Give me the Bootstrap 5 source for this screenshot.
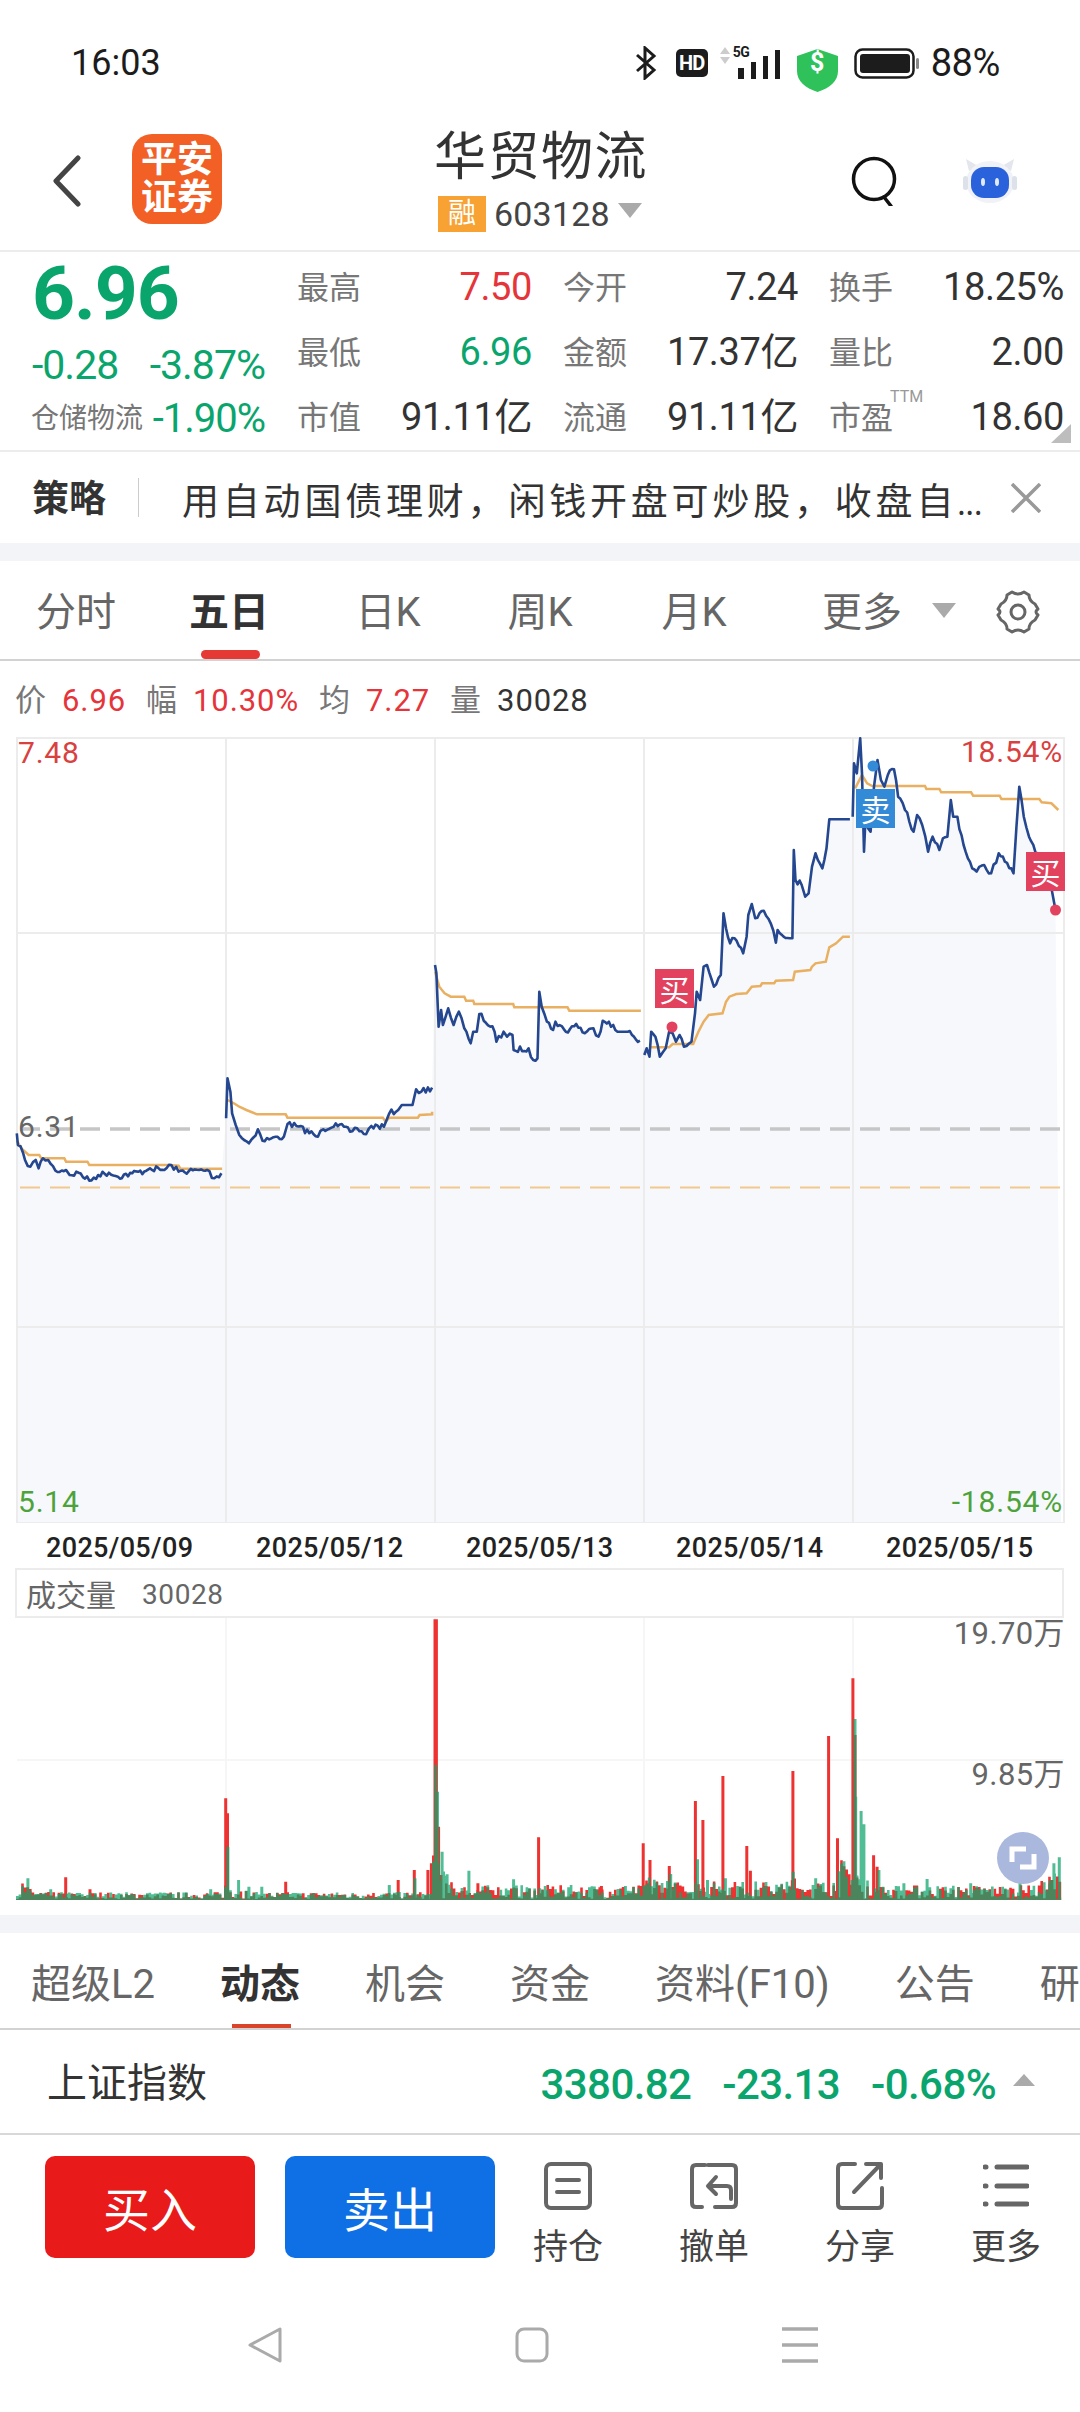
<!DOCTYPE html>
<html lang="zh-CN">
<head>
<meta charset="UTF-8" />
<meta name="viewport" content="width=device-width, initial-scale=1.0" />
<title>华贸物流</title>
<link href="https://cdn.jsdelivr.net/npm/bootstrap@5.3.0/dist/css/bootstrap.min.css" rel="stylesheet" />
<style>
  :root { --up: #e5353a; --down: #0aa56d; --band: #f3f4f8; --hair: #ececec; }
  html, body { width: 1080px; height: 2412px; overflow: hidden; background: #fff; }
  body { font-family: Roboto, "Noto Sans CJK SC", sans-serif; color: #333; }
  .up { color: var(--up); }
  .down { color: var(--down); }

  .status-bar { height: 90px; padding: 36px 80px 0 71px; font-size: 36px; color: #1c1c1c; }
  .status-icons { margin-left: auto; }
  .hd-tag { width: 32px; height: 28px; margin-left: 19px; border-radius: 5px; background: #1c1c1c; color: #fff; font-size: 20px; font-weight: 700; line-height: 28px; text-align: center; letter-spacing: -1px; }
  .sig-wrap { position: relative; width: 61px; height: 32px; margin-left: 11px; }
  .sig-5g { position: absolute; left: 14px; top: -3px; font-size: 14px; font-weight: 700; line-height: 16px; letter-spacing: -.5px; }
  .shield-wrap { position: relative; width: 41px; height: 43px; margin-left: 17px; }
  .shield-wrap span { position: absolute; inset: 0; color: #fff; font-size: 25px; font-weight: 700; line-height: 42px; text-align: center; }
  .batt-pct { margin-left: 11px; font-size: 38px; letter-spacing: -.4px; }

  .top-head { height: 162px; padding-top: 22px; border-bottom: 2px solid var(--hair); }
  .head-back { margin-left: 53px; }
  .app-logo { width: 90px; height: 90px; margin-left: 51px; margin-top: -4px; border-radius: 20px; background: #f26026; color: #fff; font-size: 36px; font-weight: 700; line-height: 38px; text-align: center; padding-top: 7px; }
  .title-block { width: 300px; margin-left: 212px; margin-top: -7px; }
  .stock-name { font-size: 52px; line-height: 62px; letter-spacing: 1.5px; color: #333; font-family: "Noto Sans CJK SC", sans-serif; }
  .code-line { height: 38px; margin: 11px 0 0 4px; }
  .rong-tag { width: 48px; height: 36px; background: #f7a233; color: #fff; font-size: 28px; line-height: 36px; text-align: center; }
  .code-num { margin-left: 8px; font-size: 34px; color: #444; letter-spacing: .2px; }
  .drop-tri { width: 0; height: 0; border-left: 12px solid transparent; border-right: 12px solid transparent; border-top: 15px solid #aaa; margin-left: 8px; margin-top: -8px; }
  .head-right { margin-left: auto; padding-right: 63px; }
  .robot-mark { margin-left: 66px; }

  .quote-box { position: relative; height: 200px; border-bottom: 2px solid var(--hair); }
  .quote-left { width: 297px; padding-left: 32px; }
  .big-price { height: 76px; padding-top: 3px; font-size: 75px; font-weight: 700; line-height: 76px; letter-spacing: -1px; color: var(--down); }
  .chg-line { margin-top: 14px; font-size: 41px; line-height: 46px; letter-spacing: -1px; width: 233px; }
  .sector-line { margin-top: 8px; width: 233px; line-height: 46px; }
  .sector-name { font-size: 28px; color: #777; margin-left: -1px; }
  .sector-val { font-size: 40px; letter-spacing: -1px; }
  .stat-wrap { display: grid; grid-template-columns: repeat(3, 235px); column-gap: 31px; grid-auto-rows: 65px; padding-top: 3px; }
  .stat-cell { position: relative; }
  .stat-key { font-size: 32px; color: #777; }
  .stat-val { font-size: 38px; letter-spacing: -.4px; }
  .ttm-sup { position: absolute; left: 61px; top: 0; font-size: 16px; color: #999; }
  .corner-tri { position: absolute; right: 9px; bottom: 7px; width: 0; height: 0; border-left: 20px solid transparent; border-bottom: 19px solid #bdbdbd; }

  .plan-row { height: 91px; padding: 5px 0 0 32px; }
  .plan-tag { font-size: 37px; font-weight: 700; color: #333; width: 106px; }
  .plan-rule { width: 1px; height: 39px; background: #ccc; margin-top: -5px; }
  .plan-text { margin-left: 43px; width: 806px; font-size: 37px; letter-spacing: 3.8px; white-space: nowrap; overflow: hidden; color: #333; font-family: "Noto Sans CJK SC", sans-serif; }
  .plan-dots { letter-spacing: 0; font-size: 30px; }
  .plan-close { margin: -5px 0 0 23px; }
  .gap-band { height: 18px; background: var(--band); }

  .period-row { position: relative; height: 100px; border-bottom: 2px solid #d2d2d2; }
  .period-grid { display: grid; grid-template-columns: 152px 154px 164px 140px 168px 168px; width: 946px; }
  .period-tab { position: relative; height: 98px; line-height: 104px; text-align: center; font-size: 40px; color: #666; }
  .period-tab.on { color: #333; font-weight: 700; }
  .period-tab.on::after { content: ""; position: absolute; left: 49px; bottom: 0; width: 59px; height: 9px; border-radius: 5px; background: #e53935; }
  .tri-gray { position: absolute; left: 932px; top: 42px; width: 0; height: 0; border-left: 12px solid transparent; border-right: 12px solid transparent; border-top: 15px solid #aaa; }
  .gear-pos { position: absolute; left: 996px; top: 29px; }

  .info-line { height: 76px; padding: 5px 0 0 15px; font-size: 31px; color: #777; }
  .info-line b { font-weight: 400; margin: 0 20px 0 16px; letter-spacing: .9px; }
  .info-line .vol-num { color: #333; }

  .price-panel { position: relative; height: 786px; }
  .price-panel svg, .vol-panel svg { display: block; }
  .axis-tag { position: absolute; font-size: 30px; line-height: 32px; letter-spacing: .8px; }
  .trade-flag { position: absolute; width: 39px; height: 39px; color: #fff; font-size: 30px; line-height: 38px; text-align: center; font-family: "Noto Sans CJK SC", sans-serif; }
  .flag-buy { background: #e3425f; }
  .flag-sell { background: #338ad6; }

  .date-row { height: 45px; padding: 5px 0 0 46px; gap: 62px; font-size: 27px; font-weight: 500; color: #222; letter-spacing: .35px; }
  .date-row span { width: 148px; white-space: nowrap; }
  .vol-head { height: 50px; margin: 0 16px 0 15px; padding: 4px 0 0 9px; border: 2px solid var(--hair); font-size: 30px; color: #666; gap: 26px; }
  .vol-head span + span { font-size: 28px; letter-spacing: .6px; }
  .vol-panel { position: relative; height: 297px; }
  .vol-tag { position: absolute; right: 15px; font-size: 31px; line-height: 34px; color: #666; letter-spacing: .4px; }
  .zoom-btn { position: absolute; left: 997px; top: 214px; width: 52px; height: 52px; }

  .info-tabs { height: 97px; padding-left: 31px; gap: 65px; border-bottom: 2px solid #d2d2d2; overflow: hidden; }
  .info-tab { position: relative; flex: none; height: 95px; line-height: 104px; font-size: 40px; color: #666; }
  .info-tab.on { color: #333; font-weight: 700; }
  .info-tab.on::after { content: ""; position: absolute; left: 12px; bottom: 0; width: 59px; height: 4px; background: #d9442a; }
  .index-row { height: 105px; padding: 5px 45px 0 47px; border-bottom: 2px solid #d8d8d8; }
  .index-name { font-size: 40px; color: #333; }
  .index-vals { margin-left: auto; gap: 31px; font-size: 42px; font-weight: 500; color: var(--down); letter-spacing: -.6px; }
  .tri-up { width: 0; height: 0; margin: -8px 0 0 17px; border-left: 11px solid transparent; border-right: 11px solid transparent; border-bottom: 12px solid #aaa; }

  .action-row { height: 139px; padding: 21px 0 0 45px; }
  .act-btn { width: 210px; height: 102px; padding: 0; border: 0; border-radius: 10px; font-size: 47px; color: #fff; letter-spacing: 0; line-height: 110px; }
  .act-buy, .act-buy:hover { background: #e91a1a; color: #fff; }
  .act-sell, .act-sell:hover { background: #0f70e6; color: #fff; margin-left: 30px; }
  .act-cell { width: 146px; text-align: center; font-size: 35px; color: #444; line-height: 40px; }
  .act-cell svg { display: block; margin: 6px auto 18px; }
  .nav-row { height: 138px; padding: 53px 14px 0 0; }
  .nav-row svg + svg { margin-left: 233px; }
</style>
</head>
<body>
  <!-- status bar -->
  <div class="status-bar d-flex align-items-center">
    <span>16:03</span>
    <div class="status-icons d-flex align-items-center">
      <svg width="22" height="34" viewBox="0 0 22 34" fill="none" stroke="#1c1c1c" stroke-width="3"><path d="M2 9 19 24 10 32V2l9 8L2 25"/></svg>
      <div class="hd-tag">HD</div>
      <div class="sig-wrap">
        <svg class="position-absolute top-0 start-0" width="61" height="32" viewBox="0 0 61 32">
          <path d="M1 7 6 0l5 7zM1 10l5 7 5-7z" fill="#ccc"/>
          <path d="M19 21h6v11h-6zM32 15h5v17h-5zM44 9h5v23h-5zM56 3h5v29h-5z" fill="#1c1c1c"/>
        </svg>
        <span class="sig-5g">5G</span>
      </div>
      <div class="shield-wrap">
        <svg width="41" height="43" viewBox="0 0 41 43"><path d="M20.5 0 41 7v15c0 10-8 17-20.500 21C8 39 0 32 0 22V7z" fill="#2fc25b"/></svg>
        <span>$</span>
      </div>
      <svg class="ms-3" width="66" height="31" viewBox="0 0 66 31" fill="none"><rect x="1.500" y="1.500" width="58" height="28" rx="7" stroke="#1c1c1c" stroke-width="2.500"/><rect x="6" y="6" width="50" height="19" rx="3" fill="#1c1c1c"/><rect x="62" y="10" width="3" height="11" rx="1.500" fill="#888"/></svg>
      <span class="batt-pct">88%</span>
    </div>
  </div>

  <!-- stock header -->
  <div class="top-head d-flex align-items-center">
    <svg class="head-back" width="28" height="52" viewBox="0 0 28 52" fill="none" stroke="#444" stroke-width="5" stroke-linecap="round" stroke-linejoin="round"><path d="M25 3 3 26l22 23"/></svg>
    <div class="app-logo">平安<br />证券</div>
    <div class="title-block">
      <div class="stock-name">华贸物流</div>
      <div class="code-line d-flex align-items-center">
        <div class="rong-tag">融</div>
        <span class="code-num">603128</span>
        <i class="drop-tri"></i>
      </div>
    </div>
    <div class="head-right d-flex align-items-center">
      <svg width="46" height="50" viewBox="0 0 46 50" fill="none" stroke="#111" stroke-width="3.500"><circle cx="23" cy="23" r="20.500"/><path d="m33 41 7 9" stroke-linecap="round"/></svg>
      <svg class="robot-mark" width="54" height="44" viewBox="0 0 54 44">
        <path d="M6 12 3 0l12 7zM48 12l3-12-12 7z" fill="#e3e6ec"/>
        <ellipse cx="27" cy="23" rx="24" ry="21" fill="#f0f2f7"/>
        <rect x="0" y="17" width="5" height="14" rx="2.500" fill="#dde1e9"/><rect x="49" y="17" width="5" height="14" rx="2.500" fill="#dde1e9"/>
        <rect x="8" y="8" width="38" height="31" rx="13" fill="#2a62db"/>
        <ellipse cx="20" cy="23" rx="2" ry="4" fill="#dfeaff"/><ellipse cx="34" cy="23" rx="2" ry="4" fill="#dfeaff"/>
      </svg>
    </div>
  </div>

  <!-- quote block -->
  <div class="quote-box d-flex">
    <div class="quote-left">
      <div class="big-price">6.96</div>
      <div class="chg-line down d-flex justify-content-between"><span>-0.28</span><span>-3.87%</span></div>
      <div class="sector-line d-flex justify-content-between align-items-center"><span class="sector-name">仓储物流</span><span class="sector-val down">-1.90%</span></div>
    </div>
    <div class="stat-wrap" id="statWrap"></div>
    <i class="corner-tri"></i>
  </div>

  <!-- strategy -->
  <div class="plan-row d-flex align-items-center">
    <div class="plan-tag">策略</div>
    <i class="plan-rule"></i>
    <div class="plan-text">用自动国债理财，闲钱开盘可炒股，收盘自<span class="plan-dots">...</span></div>
    <svg class="plan-close" width="30" height="30" viewBox="0 0 30 30" stroke="#999" stroke-width="3.500"><path d="m1 1 28 28M29 1 1 29"/></svg>
  </div>
  <div class="gap-band"></div>

  <!-- period tabs -->
  <div class="period-row">
    <div class="period-grid">
      <div class="period-tab">分时</div>
      <div class="period-tab on">五日</div>
      <div class="period-tab">日K</div>
      <div class="period-tab">周K</div>
      <div class="period-tab">月K</div>
      <div class="period-tab">更多</div>
    </div>
    <i class="tri-gray"></i>
    <svg class="gear-pos" width="44" height="44" viewBox="0 0 44 44" fill="none" stroke="#666" stroke-width="3" stroke-linejoin="round"><path d="M16 2Q22 6 28 2L33 5Q33 11 39 14L42 19Q38 22 42 25L39 30Q33 33 33 39L28 42Q22 38 16 42L11 39Q11 33 5 30L2 25Q6 22 2 19L5 14Q11 11 11 5Z"/><circle cx="22" cy="22" r="7"/></svg>
  </div>

  <div class="info-line d-flex align-items-center">
    价<b class="up">6.96</b>幅<b class="up">10.30%</b>均<b class="up">7.27</b>量<b class="vol-num">30028</b>
  </div>

  <!-- price chart -->
  <div class="price-panel">
    <svg id="priceSvg" width="1080" height="786" viewBox="0 737 1080 786"></svg>
    <span class="axis-tag" style="left:18px;top:0;color:#d9413f">7.48</span>
    <span class="axis-tag" style="right:17px;top:-1px;color:#d9413f">18.54%</span>
    <span class="axis-tag" style="left:18px;top:374px;color:#666">6.31</span>
    <span class="axis-tag" style="left:18px;top:749px;color:#4da33a">5.14</span>
    <span class="axis-tag" style="right:17px;top:749px;color:#4da33a">-18.54%</span>
    <div class="trade-flag flag-buy" style="left:655px;top:232px">买</div>
    <div class="trade-flag flag-sell" style="left:856px;top:52px">卖</div>
    <div class="trade-flag flag-buy" style="left:1026px;top:115px">买</div>
  </div>

  <div class="date-row d-flex align-items-center">
    <span>2025/05/09</span><span>2025/05/12</span><span>2025/05/13</span><span>2025/05/14</span><span>2025/05/15</span>
  </div>
  <div class="vol-head d-flex align-items-center"><span>成交量</span><span>30028</span></div>

  <!-- volume chart -->
  <div class="vol-panel">
    <svg id="volSvg" width="1080" height="282" viewBox="0 1618 1080 282"></svg>
    <span class="vol-tag" style="top:-1px">19.70万</span>
    <span class="vol-tag" style="top:140px">9.85万</span>
    <svg class="zoom-btn" viewBox="0 0 52 52"><circle cx="26" cy="26" r="26" fill="#a9b8dc"/><path d="M29 17H15v13M23 35h14V22" fill="none" stroke="#fff" stroke-width="5"/></svg>
  </div>
  <div class="gap-band"></div>

  <div class="info-tabs d-flex">
    <div class="info-tab">超级L2</div>
    <div class="info-tab on">动态</div>
    <div class="info-tab">机会</div>
    <div class="info-tab">资金</div>
    <div class="info-tab">资料(F10)</div>
    <div class="info-tab">公告</div>
    <div class="info-tab">研</div>
  </div>

  <div class="index-row d-flex align-items-center">
    <span class="index-name">上证指数</span>
    <div class="index-vals d-flex align-items-center"><span>3380.82</span><span>-23.13</span><span>-0.68%</span></div>
    <i class="tri-up"></i>
  </div>

  <!-- trade actions -->
  <div class="action-row d-flex align-items-start">
    <button class="btn act-btn act-buy" type="button">买入</button>
    <button class="btn act-btn act-sell" type="button">卖出</button>
    <div class="act-cell">
      <svg width="48" height="48" viewBox="0 0 48 48" fill="none" stroke="#666" stroke-width="4" stroke-linecap="round"><rect x="2" y="2" width="44" height="44" rx="5"/><path d="M13 18h22M13 30h22"/></svg>
      持仓
    </div>
    <div class="act-cell">
      <svg width="48" height="48" viewBox="0 0 48 48" fill="none" stroke="#666" stroke-width="4" stroke-linecap="round" stroke-linejoin="round"><path d="M15 3H6Q2 3 2 7v34q0 4 4 4h6M18 3h24q4 0 4 4v34q0 4-4 4H25"/><path d="M26 16 18 25h19q4 0 4 4v9M18 25l8 8" transform="translate(0 -1)"/></svg>
      撤单
    </div>
    <div class="act-cell">
      <svg width="48" height="48" viewBox="0 0 48 48" fill="none" stroke="#666" stroke-width="4" stroke-linecap="round" stroke-linejoin="round"><path d="M19 2H6Q2 2 2 6v36q0 4 4 4h36q4 0 4-4V26"/><path d="M18 30 44 3M30 2h15v14"/></svg>
      分享
    </div>
    <div class="act-cell">
      <svg width="46" height="48" viewBox="0 0 46 48" fill="none" stroke="#666" stroke-width="5" stroke-linecap="round"><path d="M14 5h30M14 24h30M14 42h30M2 5h1M2 24h1M2 42h1"/></svg>
      更多
    </div>
  </div>

  <!-- system nav -->
  <div class="nav-row d-flex justify-content-center align-items-start">
    <svg width="34" height="36" viewBox="0 0 34 36" fill="none" stroke="#aaa" stroke-width="3" stroke-linejoin="round"><path d="M32 2v32L2 18z"/></svg>
    <svg width="34" height="36" viewBox="0 0 34 36" fill="none" stroke="#aaa" stroke-width="3"><rect x="2" y="2" width="30" height="32" rx="7"/></svg>
    <svg width="36" height="36" viewBox="0 0 36 36" fill="none" stroke="#aaa" stroke-width="3.500"><path d="M0 2h36M0 18h36M0 34h36"/></svg>
  </div>

  <script>
    document.addEventListener("DOMContentLoaded", function () {
      // quote table
      const stats = [
        ["最高", "7.50", "up"], ["今开", "7.24", ""], ["换手", "18.25%", ""],
        ["最低", "6.96", "down"], ["金额", "17.37亿", ""], ["量比", "2.00", ""],
        ["市值", "91.11亿", ""], ["流通", "91.11亿", ""], ["市盈", "18.60", ""],
      ];
      document.getElementById("statWrap").innerHTML = stats
        .map(function (s) {
          const ttm = s[0] === "市盈" ? '<span class="ttm-sup">TTM</span>' : "";
          return `<div class="stat-cell d-flex justify-content-between align-items-center"><span class="stat-key">${s[0]}</span>${ttm}<span class="stat-val ${s[2]}">${s[1]}</span></div>`;
        })
        .join("");

      // small repeatable noise
      let seed = 7;
      function rnd() {
        seed = (seed * 16807) % 2147483647;
        return seed / 2147483647;
      }

      // traced from the picture, in two crop spaces
      const a = (x, y) => [x / 2.8, 720 + y / 3];
      const b = (x, y) => [540 + x / 2.904, 720 + y / 3];
      function pts(fn, s) {
        return s.split(/[ ;]+/).filter(Boolean).map(function (p) {
          const v = p.split(",").map(Number);
          return fn(v[0], v[1]);
        });
      }
      function jag(list, amt) {
        const out = [];
        for (let i = 0; i < list.length - 1; i++) {
          const p = list[i], q = list[i + 1];
          out.push(p);
          const dx = q[0] - p[0];
          if (dx < 4 || p[1] === q[1]) continue;
          const steps = Math.floor(dx / 2);
          for (let k = 1; k < steps; k++) {
            const t = k / steps;
            out.push([p[0] + dx * t, p[1] + (q[1] - p[1]) * t + (rnd() - 0.5) * amt]);
          }
        }
        out.push(list[list.length - 1]);
        return out;
      }

      const price = [
        pts(a, "47,1240 50,1275 65,1300 70,1320 85,1340 100,1320 108,1345 120,1315 135,1320 155,1352 185,1350 195,1365 220,1358 250,1382 275,1365 305,1358 330,1370 370,1360 410,1352 420,1345 460,1350 480,1335 500,1355 580,1350 600,1375 620,1360"),
        pts(a, "633,1195 637,1075 645,1115 650,1180 660,1215 670,1245 697,1270 722,1228 735,1262 760,1255 795,1250 805,1212 830,1218 890,1250 905,1228 940,1210 980,1235 1000,1225 1025,1243 1040,1218 1075,1220 1090,1180 1115,1170 1125,1155 1155,1155 1165,1108 1180,1115 1210,1103"),
        pts(a, "1218,735 1222,760 1228,920 1235,870 1240,915 1255,865 1270,915 1285,875 1300,925 1318,970 1325,935 1335,935 1342,882 1385,935 1390,965 1410,935 1420,950 1435,945 1438,990 1480,985 1493,1020 1505,1015 1510,815").concat(
          pts(b, "5,860 20,905 38,930 45,905 75,935 105,912 130,940 155,925 170,950 182,902 200,905 225,935 255,935 290,962")),
        pts(b, "303,1005 310,985 318,1010 323,935 335,950 348,1010 365,985 375,935 385,940 395,965 405,945 418,980 440,965 450,880 455,815 465,840 475,740 485,735 505,800 525,765 533,580 540,625 552,670 565,655 590,700 600,650 605,585 615,552 625,595 650,572 670,610 685,668 690,630 725,655 733,655 737,390 742,480 760,495 770,530 780,520 790,440 800,400 820,445 832,385 840,298 900,298"),
        pts(b, "908,290 912,130 920,160 930,55 935,160 941,395 945,300 960,335 970,200 980,120 990,180 1000,200 1010,165 1028,148 1040,230 1060,270 1085,335 1095,285 1110,315 1127,395 1140,350 1160,390 1170,355 1183,350 1193,240 1200,290 1212,290 1230,375 1255,445 1268,455 1290,435 1310,460 1332,400 1350,425 1375,460 1392,200 1405,290 1420,350 1445,400 1470,480 1487,515 1497,570"),
      ].map((d) => jag(d, 6));

      const avg = [
        pts(a, "47,1262 60,1285 80,1305 110,1305 115,1315 180,1315 185,1325 245,1325 250,1335 470,1335 500,1337 505,1346 622,1346"),
        pts(a, "637,1140 655,1150 670,1160 690,1170 720,1183 800,1183 805,1193 1072,1193 1080,1205 1090,1193 1170,1193 1175,1185 1210,1183 1210,1175"),
        pts(a, "1218,755 1230,800 1245,820 1262,830 1300,830 1305,842 1325,842 1328,852 1437,852 1440,862").concat(pts(b, "80,862 85,872 293,872")),
        pts(b, "320,982 375,982 385,972 445,972 460,935 475,905 490,885 530,880 540,845 550,830 570,822 600,820 615,800 640,798 645,790 680,790 685,782 735,780 740,755 785,750 790,740 800,730 830,725 840,682 860,670 880,650 900,650"),
        pts(b, "915,205 935,165 950,190 965,198 1118,198 1122,207 1160,207 1165,217 1252,217 1258,227 1335,227 1340,237 1450,237 1457,247 1485,250 1505,270"),
      ];

      const str = (l) => l.map((p) => p[0].toFixed(1) + "," + p[1].toFixed(1)).join(" ");
      const days = [226, 435, 644, 853];
      let svg = "";
      const all = [].concat.apply([], price);
      svg += `<polygon points="17,${all[0][1].toFixed(1)} ${str(all)} 1061,1523 17,1523" fill="#f6f8fc"/>`;
      [738, 933, 1327, 1523].forEach((y) => (svg += `<path d="M17 ${y}H1064" stroke="#ececec" stroke-width="2"/>`));
      [17, 1064].concat(days).forEach((x) => (svg += `<path d="M${x} 737V1523" stroke="#ececec" stroke-width="2"/>`));
      svg += '<path d="M20 1129H1064" stroke="#c6c6c6" stroke-width="3.500" stroke-dasharray="20 10"/>';
      svg += '<path d="M20 1187.500H1064" stroke="#f2c88e" stroke-width="2" stroke-dasharray="20 10"/>';
      avg.forEach((d) => (svg += `<polyline points="${str(d)}" fill="none" stroke="#e9b062" stroke-width="2.500"/>`));
      price.forEach((d) => (svg += `<polyline points="${str(d)}" fill="none" stroke="#24478f" stroke-width="2.600" stroke-linejoin="round"/>`));
      svg += '<circle cx="672" cy="1027" r="5.500" fill="#e3425f"/><circle cx="873" cy="766" r="5.500" fill="#338ad6"/><circle cx="1055.500" cy="910" r="5.500" fill="#e3425f"/>';
      document.getElementById("priceSvg").innerHTML = svg;

      // volume bars: picked peaks plus low noise, busier after each open and each peak
      const base = 1900;
      const toA = (s) => pts((x, y) => [x / 2.8, base - (1260 - y) / 3], s);
      const toB = (s) => pts((x, y) => [520 + x / 2.8, base - (1260 - y) / 3], s);
      const redPeaks = toA("184,1192 252,1228 632,955 637,1000 800,1205 1115,1200 1160,1170 1198,1170 1208,1150 1218,418 1222,418 1228,1040 1338,1210 1508,1072").concat(
        toB("228,1218 345,1090 364,1140 418,1158 491,963 512,1020 568,888 635,1098 645,1172 764,873 864,768 889,1075 903,1180 932,595 938,765 990,1126 1000,1160"));
      const greenPeaks = toA("78,1195 142,1228 460,1238 590,1228 638,1100 668,1200 697,1220 733,1220 1090,1215 1162,1195 1220,855 1225,935 1238,1115 1252,1183 1313,1172 1438,1198").concat(
        toB("295,1218 422,1182 497,1138 525,1200 575,1195 765,1175 828,1195 938,717 940,950 955,993 963,1033 1005,1170 1075,1210 1140,1197 1262,1210 1400,1145 1485,1200 1495,1150 1510,1132"));
      const allPeaks = redPeaks.concat(greenPeaks);

      function envelope(x) {
        let h = 7;
        [17, 226, 435, 644, 853].forEach(function (o) {
          const d = x - o;
          if (d >= 0 && d < 60) h = Math.max(h, 20 * Math.exp(-d / 25));
        });
        if (x > 435) h += 7;
        if (x > 650 && x < 853) h += 4;
        if (x > 835 && x < 853) h += 22;
        if (x > 1035) h += (x - 1035) * 0.8;
        // tail after a spike
        allPeaks.forEach(function (p) {
          const d = x - p[0];
          if (d > -3 && d < 30) h = Math.max(h, (base - p[1]) * 0.22 * Math.exp(-Math.abs(d) / 9));
        });
        return h;
      }
      let bars = "";
      [226, 435, 644, 853].forEach((x) => (bars += `<path d="M${x} 1618V1900" stroke="#f6f6f6" stroke-width="2"/>`));
      bars += '<path d="M17 1760H1064" stroke="#f6f6f6" stroke-width="2"/>';
      let redLow = "", greenLow = "";
      for (let x = 16; x < 1060; x += 2.6) {
        const e = envelope(x);
        const hr = 1 + rnd() * e;
        const hg = 1 + rnd() * e;
        redLow += `M${x.toFixed(1)} ${(base - hr).toFixed(1)}h2.6V${base}h-2.6z`;
        greenLow += `M${x.toFixed(1)} ${(base - hg).toFixed(1)}h2.6V${base}h-2.6z`;
      }
      redPeaks.forEach(function (p) {
        redLow += `M${(p[0] - 1.500).toFixed(1)} ${p[1].toFixed(1)}h3V${base}h-3z`;
      });
      greenPeaks.forEach(function (p) {
        greenLow += `M${(p[0] - 1.500).toFixed(1)} ${p[1].toFixed(1)}h3V${base}h-3z`;
      });
      bars += `<path d="${redLow}" fill="#ee3232"/><path d="${greenLow}" fill="#0ea36b" fill-opacity=".72"/>`;
      document.getElementById("volSvg").innerHTML = bars;
    });
  </script>
  <script src="https://cdn.jsdelivr.net/npm/bootstrap@5.3.0/dist/js/bootstrap.bundle.min.js"></script>
</body>
</html>
